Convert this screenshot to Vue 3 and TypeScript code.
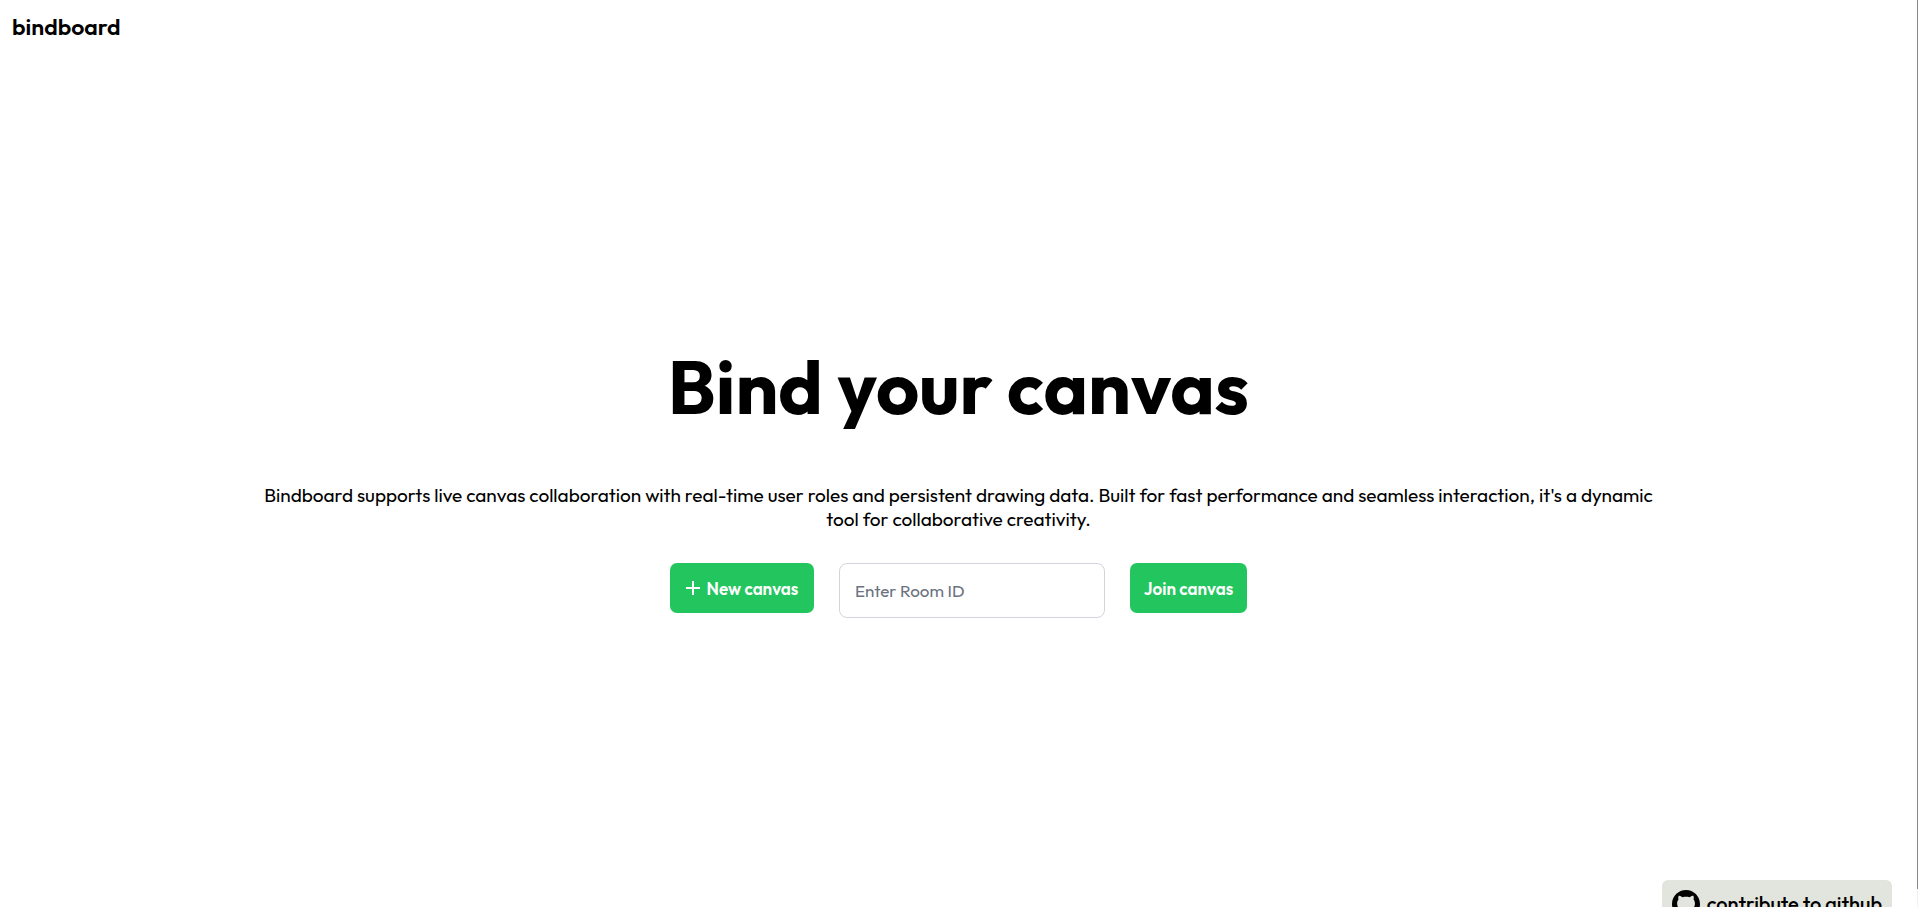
<script setup lang="ts">
import { ref } from 'vue'

const roomId = ref('')
</script>

<template>
  <div class="page">
    <header class="topbar">
      <a class="brand" href="#">bindboard</a>
    </header>

    <main class="hero">
      <h1 class="title">Bind your canvas</h1>
      <p class="intro">
        Bindboard supports live canvas collaboration with real-time user roles and persistent drawing data.
        Built for fast performance and seamless interaction, it's a dynamic tool for collaborative creativity.
      </p>
      <form class="actions" @submit.prevent>
        <button class="btn new" type="button">
          <svg class="plus" viewBox="0 0 14 14" aria-hidden="true">
            <path d="M7 0V14M0 7H14" fill="none" stroke="currentColor" stroke-width="2" />
          </svg>
          <span>New canvas</span>
        </button>
        <input v-model="roomId" class="room" type="text" placeholder="Enter Room ID" aria-label="Enter Room ID" />
        <button class="btn join" type="submit">Join canvas</button>
      </form>
    </main>

    <a class="github" href="#">
      <svg class="mark" viewBox="0 0 16 16" aria-hidden="true">
        <path
          fill="currentColor"
          d="M8 0C3.58 0 0 3.58 0 8c0 3.54 2.29 6.53 5.47 7.59.4.07.55-.17.55-.38 0-.19-.01-.82-.01-1.49-2.01.37-2.53-.49-2.69-.94-.09-.23-.48-.94-.82-1.13-.28-.15-.68-.52-.01-.53.63-.01 1.08.58 1.23.82.72 1.21 1.87.87 2.33.66.07-.52.28-.87.51-1.07-1.78-.2-3.64-.89-3.64-3.95 0-.87.31-1.59.82-2.15-.08-.2-.36-1.02.08-2.12 0 0 .67-.21 2.2.82.64-.18 1.32-.27 2-.27s1.36.09 2 .27c1.53-1.04 2.2-.82 2.2-.82.44 1.1.16 1.92.08 2.12.51.56.82 1.27.82 2.15 0 3.07-1.87 3.75-3.65 3.95.29.25.54.73.54 1.48 0 1.07-.01 1.93-.01 2.2 0 .21.15.46.55.38A8.01 8.01 0 0 0 16 8c0-4.42-3.58-8-8-8z"
        />
      </svg>
      <span>contribute to github</span>
    </a>
    <div class="rail" aria-hidden="true"></div>
  </div>
</template>

<style>
body {
  background: #fff;
}
</style>

<style scoped>
.page {
  position: relative;
  box-sizing: border-box;
  min-height: 100vh;
  overflow: hidden;
  display: flex;
  flex-direction: column;
  color: #000;
  font-family: Outfit, Lato, sans-serif;
}
.topbar {
  padding: 12px;
}
.brand {
  display: inline-block;
  color: inherit;
  font-size: 23px;
  line-height: 30px;
  font-weight: 600;
  text-decoration: none;
}
.hero {
  flex: 1;
  display: flex;
  flex-direction: column;
  align-items: center;
  justify-content: center;
  padding: 0 256px 4px 255px;
}
.title {
  margin: 0 0 48px;
  font-size: 75px;
  line-height: 96px;
  font-weight: 700;
}
.intro {
  margin: 0 0 32px;
  font-size: 19px;
  line-height: 24px;
  text-align: center;
}
.actions {
  display: flex;
  align-items: flex-start;
  gap: 25px;
}
.btn {
  display: flex;
  align-items: center;
  justify-content: center;
  gap: 7px;
  height: 50px;
  padding: 0;
  border: 0;
  border-radius: 7px;
  background: #22c55e;
  color: #fff;
  font: inherit;
  font-size: 17px;
  font-weight: 600;
  white-space: nowrap;
}
.new {
  width: 144px;
}
.join {
  width: 117px;
}
.plus {
  width: 14px;
  height: 14px;
}
.room {
  box-sizing: border-box;
  width: 266px;
  height: 55px;
  padding: 0 15px;
  border: 1px solid #d1d5db;
  border-radius: 8px;
  background: #fff;
  color: #000;
  font: inherit;
  font-size: 17px;
}
.room::placeholder {
  color: #6b7280;
  opacity: 1;
}
.github {
  position: absolute;
  right: 26px;
  bottom: -21px;
  box-sizing: border-box;
  display: flex;
  align-items: center;
  gap: 7px;
  height: 48px;
  padding: 0 10px;
  border-radius: 6px;
  background: #e1e5dd;
  color: #000;
  font-size: 20px;
  line-height: 24px;
  font-weight: 500;
  text-decoration: none;
}
.mark {
  width: 28px;
  height: 28px;
}
.rail {
  position: absolute;
  top: 0;
  right: 0;
  bottom: 0;
  width: 1px;
  background: linear-gradient(to top, #f1f1f1 18px, #888 18px);
}
</style>
